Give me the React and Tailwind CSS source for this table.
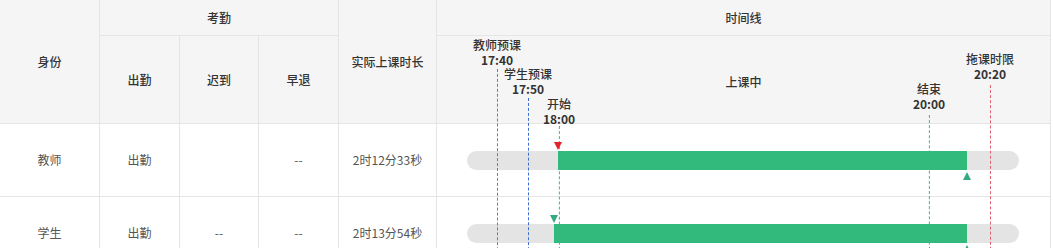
import React from 'react'

const markers = [
  { label: '教师预课', time: '17:40', pos: 'left-[60px] top-[1px]', gap: 'mt-[2px]', line: 'border-[#d03fd8]' },
  { label: '学生预课', time: '17:50', pos: 'left-[91px] top-[30px]', gap: 'mt-[2px]', line: 'border-[#3a6fd0]' },
  { label: '开始', time: '18:00', pos: 'left-[122px] top-[60px]', gap: 'mt-0', line: 'border-[#3fb38c]' },
  { label: '结束', time: '20:00', pos: 'left-[492px] top-[45px]', gap: 'mt-[4px]', line: 'border-[#3fb38c]' },
  { label: '拖课时限', time: '20:20', pos: 'left-[553px] top-[15px]', gap: 'mt-[4px]', line: 'border-[#e2606f]' },
]

const rows = [
  { role: '教师', attend: '出勤', late: '', early: '--', duration: '2时12分33秒', row: 'row-start-3', start: 'ml-[91px] w-[409px]', flag: 'border-t-[#e3242b]' },
  { role: '学生', attend: '出勤', late: '--', early: '--', duration: '2时13分54秒', row: 'row-start-4', start: 'ml-[87px] w-[413px]', flag: 'border-t-[#36a982]' },
]

function Cell({ className = '', children }) {
  return (
    <div className={`flex items-center justify-center border-r border-b border-[#e5e5e5] ${className}`}>
      {children}
    </div>
  )
}

export default function App() {
  return (
    <div className="bg-white w-[1053px] h-[248px] overflow-hidden font-['Noto_Sans_CJK_SC','Microsoft_YaHei',sans-serif] text-xs">
      <div className="grid grid-cols-[100px_80px_79px_80px_98px_614px] grid-rows-[36px_88px_73px_73px]">
        {/* Header */}
        <Cell className="col-start-1 row-start-1 row-span-2 bg-[#f5f5f5] text-[#333] font-medium">身份</Cell>
        <Cell className="col-start-2 row-start-1 col-span-3 bg-[#f5f5f5] text-[#333] font-medium">考勤</Cell>
        <Cell className="col-start-5 row-start-1 row-span-2 bg-[#f5f5f5] text-[#333] font-medium">实际上课时长</Cell>
        <Cell className="col-start-6 row-start-1 bg-[#f5f5f5] text-[#333] font-medium">时间线</Cell>
        <Cell className="col-start-2 row-start-2 bg-[#f5f5f5] text-[#333] font-medium">出勤</Cell>
        <Cell className="col-start-3 row-start-2 bg-[#f5f5f5] text-[#333] font-medium">迟到</Cell>
        <Cell className="col-start-4 row-start-2 bg-[#f5f5f5] text-[#333] font-medium">早退</Cell>
        <Cell className="col-start-6 row-start-2 bg-[#f5f5f5] text-[#333] font-medium pt-1">上课中</Cell>

        {/* Body */}
        {rows.map((r) => (
          <React.Fragment key={r.role}>
            <Cell className={`col-start-1 ${r.row} text-[#555]`}>{r.role}</Cell>
            <Cell className={`col-start-2 ${r.row} text-[#555]`}>{r.attend}</Cell>
            <Cell className={`col-start-3 ${r.row} text-[#555]`}>{r.late}</Cell>
            <Cell className={`col-start-4 ${r.row} text-[#555]`}>{r.early}</Cell>
            <Cell className={`col-start-5 ${r.row} text-[#555]`}>{r.duration}</Cell>
            <div className={`col-start-6 ${r.row} flex items-center border-r border-b border-[#e5e5e5] pl-[30px]`}>
              <div className="flex w-[552px] h-[19px] rounded-full bg-[#e4e4e4]">
                <div className={`relative z-10 h-full bg-[#31ba7b] ${r.start}`}>
                  <span className={`absolute -top-[9px] left-0 -translate-x-1/2 w-0 h-0 border-l-4 border-r-4 border-t-[8px] border-l-transparent border-r-transparent ${r.flag}`} />
                  <span className="absolute top-full mt-[2px] right-0 translate-x-1/2 w-0 h-0 border-l-4 border-r-4 border-b-[8px] border-l-transparent border-r-transparent border-b-[#36a982]" />
                </div>
              </div>
            </div>
          </React.Fragment>
        ))}

        {/* Timeline markers over the header and rows */}
        <div className="col-start-6 row-start-2 row-span-3 relative pointer-events-none">
          {markers.map((m) => (
            <div key={m.time} className={`absolute bottom-0 flex flex-col items-center -translate-x-1/2 ${m.pos}`}>
              <div className="text-[#333] leading-[15px] font-medium text-center">{m.label}</div>
              <div className="text-[#333] leading-[15px] font-bold text-center">{m.time}</div>
              <div className={`flex-1 w-0 border-l border-dashed ${m.line} ${m.gap}`} />
            </div>
          ))}
        </div>
      </div>
    </div>
  )
}
